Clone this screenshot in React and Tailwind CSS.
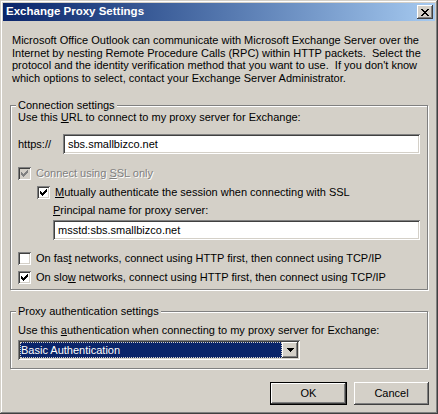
import React from "react";

const raised =
  "shadow-[inset_-1px_-1px_0_#404040,inset_1px_1px_0_#ffffff,inset_-2px_-2px_0_#808080,inset_2px_2px_0_#d4d0c8]";
const sunken =
  "shadow-[inset_1px_1px_0_#808080,inset_-1px_-1px_0_#ffffff,inset_2px_2px_0_#404040,inset_-2px_-2px_0_#d4d0c8]";

function CheckGlyph({ color = "#000" }) {
  // classic 7x7 pixel check mark
  const tops = [2, 3, 4, 3, 2, 1, 0];
  return (
    <svg width="9" height="9" viewBox="0 0 9 9" shapeRendering="crispEdges">
      {tops.map((t, i) => (
        <rect key={i} x={i + 1} y={t + 1} width="1" height="3" fill={color} />
      ))}
    </svg>
  );
}

function Checkbox({ checked, disabled, children, className = "" }) {
  return (
    <div className={`flex h-[13px] items-center ${className}`}>
      <div
        className={`flex h-[13px] w-[13px] shrink-0 items-center justify-center ${sunken} ${
          disabled ? "bg-[#d4d0c8]" : "bg-white"
        }`}
      >
        {checked && <CheckGlyph color={disabled ? "#808080" : "#000"} />}
      </div>
      <span
        className={`ml-[5px] leading-[13px] ${
          disabled ? "text-[#808080] [text-shadow:1px_1px_0_#ffffff]" : ""
        }`}
      >
        {children}
      </span>
    </div>
  );
}

function GroupBox({ title, className = "", children }) {
  return (
    <div
      className={`relative border border-[#808080] shadow-[inset_1px_1px_0_#ffffff,1px_1px_0_#ffffff] ${className}`}
    >
      <span className="absolute -top-[7px] left-[5px] bg-[#d4d0c8] px-[2px] leading-[13px]">
        {title}
      </span>
      {children}
    </div>
  );
}

function TextBox({ value, className = "" }) {
  return (
    <div className={`flex h-[20px] items-center bg-white pl-[5px] ${sunken} ${className}`}>
      {value}
    </div>
  );
}

export default function App() {
  return (
    <div
      className={`flex h-[414px] w-[438px] flex-col bg-[#d4d0c8] p-[3px] font-['Liberation_Sans',Arial,sans-serif] text-[11px] text-black shadow-[inset_-1px_-1px_0_#404040,inset_1px_1px_0_#d4d0c8,inset_-2px_-2px_0_#808080,inset_2px_2px_0_#ffffff]`}
    >
      {/* title bar */}
      <div className="flex h-[18px] items-center bg-gradient-to-r from-[#0a246a] to-[#a6caf0] pl-[3px] pr-[2px]">
        <span className="flex-1 text-[11.5px] font-bold text-white">Exchange Proxy Settings</span>
        <div className={`flex h-[14px] w-[16px] items-center justify-center bg-[#d4d0c8] ${raised}`}>
          <svg width="8" height="7" viewBox="0 0 8 7" shapeRendering="crispEdges">
            <path
              d="M0 0h2v1h-2zM6 0h2v1h-2zM1 1h2v1h-2zM5 1h2v1h-2zM2 2h4v1h-4zM3 3h2v1h-2zM2 4h4v1h-4zM1 5h2v1h-2zM5 5h2v1h-2zM0 6h2v1h-2zM6 6h2v1h-2z"
              fill="#000"
            />
          </svg>
        </div>
      </div>

      <div className="flex flex-1 flex-col px-[7px]">
        <p className="mt-[13px] pl-[2px] leading-[12.7px]">
          Microsoft Office Outlook can communicate with Microsoft Exchange Server over the
          Internet by nesting Remote Procedure Calls (RPC) within HTTP packets.&nbsp; Select the
          protocol and the identity verification method that you want to use.&nbsp; If you don't know
          which options to select, contact your Exchange Server Administrator.
        </p>

        <GroupBox title="Connection settings" className="mt-[20px] pb-[5px] pl-[7px] pr-[7px] pt-[5px]">
          <div className="leading-[13px]">
            Use this <span className="underline">U</span>RL to connect to my proxy server for Exchange:
          </div>
          <div className="mt-[10px] flex items-center">
            <span className="w-[45px]">https://</span>
            <TextBox value="sbs.smallbizco.net" className="flex-1" />
          </div>
          <Checkbox checked disabled className="mt-[13px]">
            Connect using <span className="underline">S</span>SL only
          </Checkbox>
          <div className="pl-[19px]">
            <Checkbox checked className="mt-[6px]">
              <span className="underline">M</span>utually authenticate the session when connecting with SSL
            </Checkbox>
            <div className="mt-[5px] pl-[16px] leading-[13px]">
              <span className="underline">P</span>rincipal name for proxy server:
            </div>
            <TextBox value="msstd:sbs.smallbizco.net" className="ml-[16px] mt-[3px]" />
          </div>
          <Checkbox className="mt-[12px]">
            On fas<span className="underline">t</span> networks, connect using HTTP first, then connect using TCP/IP
          </Checkbox>
          <Checkbox checked className="mt-[6px]">
            On slo<span className="underline">w</span> networks, connect using HTTP first, then connect using TCP/IP
          </Checkbox>
        </GroupBox>

        <GroupBox title="Proxy authentication settings" className="mt-[21px] pb-[8px] pl-[7px] pt-[12px]">
          <div className="leading-[13px]">
            Use this <span className="underline">a</span>uthentication when connecting to my proxy server for
            Exchange:
          </div>
          <div className={`mt-[3px] flex h-[20px] w-[282px] items-center bg-white p-[2px] ${sunken}`}>
            <div className="flex h-full flex-1 items-center bg-[#0a246a] pl-[1px] text-white outline outline-1 outline-dotted outline-offset-[-1px] outline-[#d4d0c8]">
              Basic Authentication
            </div>
            <div className={`flex h-full w-[16px] items-center justify-center bg-[#d4d0c8] ${raised}`}>
              <svg width="7" height="4" viewBox="0 0 7 4" shapeRendering="crispEdges">
                <path d="M0 0h7v1h-7zM1 1h5v1h-5zM2 2h3v1h-3zM3 3h1v1h-1z" fill="#000" />
              </svg>
            </div>
          </div>
        </GroupBox>

        <div className="-mr-[1px] mt-[13px] flex justify-end gap-[7px]">
          <div className="border border-black">
            <button className={`flex h-[21px] w-[75px] items-center justify-center bg-[#d4d0c8] ${raised}`}>
              OK
            </button>
          </div>
          <button className={`flex h-[23px] w-[75px] items-center justify-center bg-[#d4d0c8] ${raised}`}>
            Cancel
          </button>
        </div>
      </div>
    </div>
  );
}
